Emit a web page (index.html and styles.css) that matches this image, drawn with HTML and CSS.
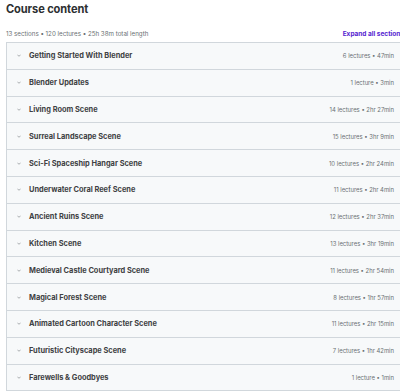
FILE: index.html
```html
<!DOCTYPE html>
<html lang="en">
<head>
    <meta charset="UTF-8">
    <title>Course content</title>
    <link rel="stylesheet" href="styles.css">
</head>
<body>
    <div class="course">
        <h2 class="course-title">Course content</h2>
        <div class="course-meta">
            <span>13 sections • 120 lectures • 25h 38m total length</span>
            <a href="#" class="expand-all">Expand all sections</a>
        </div>

        <div class="sections">
            <div class="section"><span class="chev"><svg viewBox="0 0 10 6"><path d="M1 1l4 4 4-4"/></svg></span><span class="section-title">Getting Started With Blender</span><span class="section-info">6 lectures • 47min</span></div>
            <div class="section"><span class="chev"><svg viewBox="0 0 10 6"><path d="M1 1l4 4 4-4"/></svg></span><span class="section-title">Blender Updates</span><span class="section-info">1 lecture • 3min</span></div>
            <div class="section"><span class="chev"><svg viewBox="0 0 10 6"><path d="M1 1l4 4 4-4"/></svg></span><span class="section-title">Living Room Scene</span><span class="section-info">14 lectures • 2hr 27min</span></div>
            <div class="section"><span class="chev"><svg viewBox="0 0 10 6"><path d="M1 1l4 4 4-4"/></svg></span><span class="section-title">Surreal Landscape Scene</span><span class="section-info">15 lectures • 3hr 9min</span></div>
            <div class="section"><span class="chev"><svg viewBox="0 0 10 6"><path d="M1 1l4 4 4-4"/></svg></span><span class="section-title">Sci-Fi Spaceship Hangar Scene</span><span class="section-info">10 lectures • 2hr 24min</span></div>
            <div class="section"><span class="chev"><svg viewBox="0 0 10 6"><path d="M1 1l4 4 4-4"/></svg></span><span class="section-title">Underwater Coral Reef Scene</span><span class="section-info">11 lectures • 2hr 4min</span></div>
            <div class="section"><span class="chev"><svg viewBox="0 0 10 6"><path d="M1 1l4 4 4-4"/></svg></span><span class="section-title">Ancient Ruins Scene</span><span class="section-info">12 lectures • 2hr 37min</span></div>
            <div class="section"><span class="chev"><svg viewBox="0 0 10 6"><path d="M1 1l4 4 4-4"/></svg></span><span class="section-title">Kitchen Scene</span><span class="section-info">13 lectures • 3hr 19min</span></div>
            <div class="section"><span class="chev"><svg viewBox="0 0 10 6"><path d="M1 1l4 4 4-4"/></svg></span><span class="section-title">Medieval Castle Courtyard Scene</span><span class="section-info">11 lectures • 2hr 54min</span></div>
            <div class="section"><span class="chev"><svg viewBox="0 0 10 6"><path d="M1 1l4 4 4-4"/></svg></span><span class="section-title">Magical Forest Scene</span><span class="section-info">8 lectures • 1hr 57min</span></div>
            <div class="section"><span class="chev"><svg viewBox="0 0 10 6"><path d="M1 1l4 4 4-4"/></svg></span><span class="section-title">Animated Cartoon Character Scene</span><span class="section-info">11 lectures • 2hr 15min</span></div>
            <div class="section"><span class="chev"><svg viewBox="0 0 10 6"><path d="M1 1l4 4 4-4"/></svg></span><span class="section-title">Futuristic Cityscape Scene</span><span class="section-info">7 lectures • 1hr 42min</span></div>
            <div class="section"><span class="chev"><svg viewBox="0 0 10 6"><path d="M1 1l4 4 4-4"/></svg></span><span class="section-title">Farewells &amp; Goodbyes</span><span class="section-info">1 lecture • 1min</span></div>
        </div>
    </div>
</body>
</html>
```

FILE: styles.css
```css
body {
    margin: 0;
    background: #ffffff;
    font-family: Inter, "Noto Sans", sans-serif;
    color: #2d2f31;
    overflow: hidden;
}

.course {
    margin-left: 6px;
    width: 398px;
}

.course-title {
    margin: 0;
    padding-top: 1px;
    font-size: 11.1px;
    line-height: 16px;
    font-weight: 700;
    letter-spacing: -0.1px;
}

.course-meta {
    display: flex;
    justify-content: space-between;
    align-items: center;
    margin-top: 12px;
    height: 9px;
    font-size: 6.2px;
    color: #6a6f73;
    white-space: nowrap;
}

.expand-all {
    color: #5624d0;
    font-weight: 700;
    text-decoration: none;
    font-size: 6.5px;
}

/* Section list */
.sections {
    margin-top: 4px;
    border: 1px solid #d1d7dc;
    border-bottom: none;
}

.section {
    display: flex;
    align-items: center;
    height: 26.8px;
    box-sizing: border-box;
    padding: 0 9px 0 10px;
    background: #f7f9fa;
    border-bottom: 1px solid #d1d7dc;
}

.chev {
    width: 4px;
    display: flex;
    margin-right: 8px;
}

.chev svg {
    width: 4px;
    height: 3px;
    fill: none;
    stroke: #6a6f73;
    stroke-width: 1.4;
}

.section-title {
    flex: 1;
    font-size: 7.4px;
    font-weight: 700;
    color: #3e4143;
    white-space: nowrap;
}

.section-info {
    font-size: 5.9px;
    color: #6a6f73;
    white-space: nowrap;
}
```
